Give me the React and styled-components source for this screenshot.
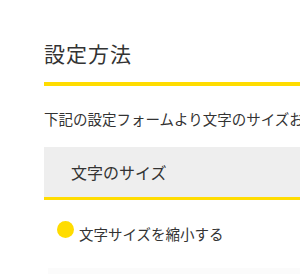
import React from "react";
import styled, { createGlobalStyle } from "styled-components";

const GlobalStyle = createGlobalStyle`
  html, body {
    margin: 0;
    padding: 0;
    background: #ffffff;
    overflow: hidden;
  }

  body {
    font-family: "Noto Sans CJK JP", "Noto Sans", sans-serif;
    color: #333333;
  }
`;

const Section = styled.section`
  width: 640px;
  padding: 38px 0 0 44px;
`;

const Title = styled.h2`
  margin: 0;
  font-size: 21px;
  font-weight: normal;
  line-height: 30px;
  letter-spacing: 1px;
  padding-bottom: 14px;
  border-bottom: 4px solid #ffdc00;
`;

const Lead = styled.p`
  margin: 21px 0 0;
  font-size: 14.5px;
  line-height: 24px;
  white-space: nowrap;
`;

const FieldHead = styled.div`
  display: flex;
  align-items: center;
  height: 50px;
  margin-top: 16px;
  padding-left: 27px;
  background: #eeeeee;
  border-bottom: 3px solid #ffdc00;
  font-size: 16px;
`;

const Options = styled.ul`
  list-style: none;
  margin: 22px 0 0;
  padding: 0 0 0 13px;
`;

const Option = styled.li`
  display: flex;
  align-items: flex-start;
  gap: 5px;
  font-size: 14.5px;
  line-height: 24px;
`;

const Dot = styled.span`
  flex: none;
  width: 17px;
  height: 17px;
  margin-top: -1px;
  border-radius: 50%;
  background: ${(p) => (p.$active ? "#ffdc00" : "#dddddd")};
`;

const NextPanel = styled.div`
  margin: 22px 0 0 4px;
  height: 40px;
  background: #fbfbfb;
`;

const App = () => {
  return (
    <>
      <GlobalStyle />
      <Section>
        <Title>設定方法</Title>
        <Lead>下記の設定フォームより文字のサイズおよび背景色を変更できます。</Lead>
        <FieldHead>文字のサイズ</FieldHead>
        <Options>
          <Option>
            <Dot $active />
            文字サイズを縮小する
          </Option>
        </Options>
        <NextPanel />
      </Section>
    </>
  );
};

export default App;
